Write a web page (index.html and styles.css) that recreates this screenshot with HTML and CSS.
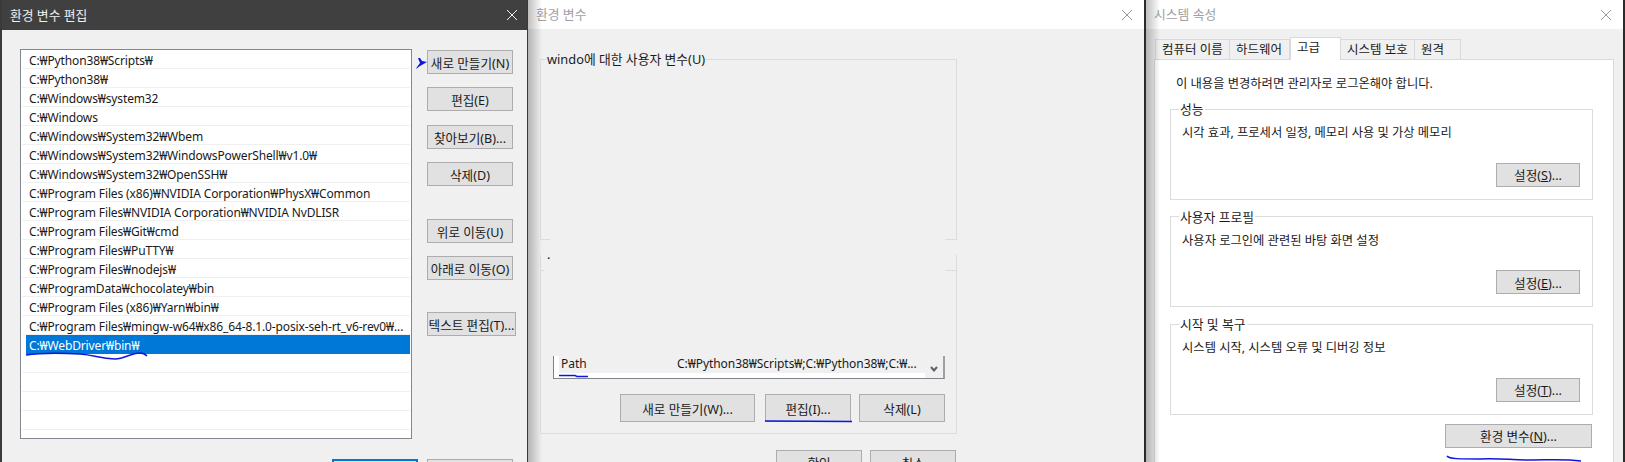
FILE: index.html
```html
<!DOCTYPE html>
<html lang="ko">
<head>
    <meta charset="UTF-8">
    <title>환경 변수 편집</title>
    <link rel="stylesheet" href="styles.css">
</head>
<body>
    <div class="desktop">
        <!-- edit dialog, focused -->
        <section class="window window-edit">
            <div class="titlebar titlebar-dark">
                <span class="title">환경 변수 편집</span>
                <svg class="close" width="12" height="12" viewBox="0 0 12 12"><path d="M1 1L11 11M11 1L1 11"/></svg>
            </div>
            <div class="edit-body">
                <div class="path-list">
                    <div class="path-row">C:₩Python38₩Scripts₩</div>
                    <div class="path-row">C:₩Python38₩</div>
                    <div class="path-row">C:₩Windows₩system32</div>
                    <div class="path-row">C:₩Windows</div>
                    <div class="path-row">C:₩Windows₩System32₩Wbem</div>
                    <div class="path-row">C:₩Windows₩System32₩WindowsPowerShell₩v1.0₩</div>
                    <div class="path-row">C:₩Windows₩System32₩OpenSSH₩</div>
                    <div class="path-row">C:₩Program Files (x86)₩NVIDIA Corporation₩PhysX₩Common</div>
                    <div class="path-row">C:₩Program Files₩NVIDIA Corporation₩NVIDIA NvDLISR</div>
                    <div class="path-row">C:₩Program Files₩Git₩cmd</div>
                    <div class="path-row">C:₩Program Files₩PuTTY₩</div>
                    <div class="path-row">C:₩Program Files₩nodejs₩</div>
                    <div class="path-row">C:₩ProgramData₩chocolatey₩bin</div>
                    <div class="path-row">C:₩Program Files (x86)₩Yarn₩bin₩</div>
                    <div class="path-row">C:₩Program Files₩mingw-w64₩x86_64-8.1.0-posix-seh-rt_v6-rev0₩...</div>
                    <div class="path-row selected"><span>C:₩WebDriver₩bin₩</span></div>
                    <div class="path-row"></div>
                    <div class="path-row"></div>
                    <div class="path-row"></div>
                    <div class="path-row"></div>
                </div>
                <div class="edit-buttons">
                    <button class="btn gap-13">새로 만들기(N)</button>
                    <button class="btn gap-14">편집(E)</button>
                    <button class="btn gap-13">찾아보기(B)...</button>
                    <button class="btn gap-33">삭제(D)</button>
                    <button class="btn gap-13">위로 이동(U)</button>
                    <button class="btn gap-32">아래로 이동(O)</button>
                    <button class="btn btn-wide">텍스트 편집(T)...</button>
                </div>
            </div>
            <div class="edit-footer">
                <button class="btn btn-default">확인</button>
                <button class="btn">취소</button>
            </div>
        </section>

        <!-- environment variables dialog -->
        <section class="window window-env">
            <div class="titlebar titlebar-light">
                <span class="title">환경 변수</span>
                <svg class="close" width="12" height="12" viewBox="0 0 12 12"><path d="M1 1L11 11M11 1L1 11"/></svg>
            </div>
            <div class="env-body">
                <fieldset class="env-group env-user">
                    <legend>windo에 대한 사용자 변수(U)</legend>
                </fieldset>
                <fieldset class="env-group env-system">
                    <legend>.</legend>
                    <div class="var-list">
                        <div class="var-row">
                            <span class="var-name">Path</span>
                            <span class="var-value">C:₩Python38₩Scripts₩;C:₩Python38₩;C:₩...</span>
                        </div>
                        <div class="var-scroll">
                            <svg width="8" height="6" viewBox="0 0 8 6"><path d="M1 1L4 4.5L7 1"/></svg>
                        </div>
                    </div>
                    <div class="env-buttons">
                        <button class="btn btn-new">새로 만들기(W)...</button>
                        <button class="btn btn-env">편집(I)...</button>
                        <button class="btn btn-env">삭제(L)</button>
                    </div>
                </fieldset>
                <div class="env-footer">
                    <button class="btn btn-ok">확인</button>
                    <button class="btn btn-ok">취소</button>
                </div>
            </div>
        </section>

        <!-- system properties dialog -->
        <section class="window window-sys">
            <div class="titlebar titlebar-light">
                <span class="title">시스템 속성</span>
                <svg class="close" width="12" height="12" viewBox="0 0 12 12"><path d="M1 1L11 11M11 1L1 11"/></svg>
            </div>
            <div class="sys-body">
                <div class="tabs">
                    <div class="tab tab-1">컴퓨터 이름</div>
                    <div class="tab tab-2">하드웨어</div>
                    <div class="tab tab-3 active">고급</div>
                    <div class="tab tab-4">시스템 보호</div>
                    <div class="tab tab-5">원격</div>
                </div>
                <div class="panel">
                    <p class="panel-note">이 내용을 변경하려면 관리자로 로그온해야 합니다.</p>
                    <fieldset class="sys-group">
                        <legend>성능</legend>
                        <p>시각 효과, 프로세서 일정, 메모리 사용 및 가상 메모리</p>
                        <button class="btn btn-set">설정(<u>S</u>)...</button>
                    </fieldset>
                    <fieldset class="sys-group">
                        <legend>사용자 프로필</legend>
                        <p>사용자 로그인에 관련된 바탕 화면 설정</p>
                        <button class="btn btn-set">설정(<u>E</u>)...</button>
                    </fieldset>
                    <fieldset class="sys-group">
                        <legend>시작 및 복구</legend>
                        <p>시스템 시작, 시스템 오류 및 디버깅 정보</p>
                        <button class="btn btn-set">설정(<u>T</u>)...</button>
                    </fieldset>
                    <div class="panel-footer">
                        <button class="btn btn-vars">환경 변수(<u>N</u>)...</button>
                    </div>
                </div>
            </div>
        </section>

        <!-- pen marks drawn over the screenshot -->
        <svg class="scribbles" width="1625" height="462" viewBox="0 0 1625 462">
            <path class="pen-fill" d="M418 58L420 58L422 61L427 62L420 66L416 69L417 67L420 63Z"/>
            <path class="pen" d="M26 355C40 353 60 353 80 354C95 355 100 359 115 359C125 359 130 353 140 353C143 353 145 354 147 356"/>
            <path class="pen" d="M559 375.5L575 375.5L577 376.5L588 376.5"/>
            <path class="pen" d="M765 421L852 421.5"/>
            <path class="pen" d="M1447 456C1449 459 1460 459 1480 459C1500 458 1510 460 1530 460C1550 460 1565 459 1581 461"/>
        </svg>
    </div>
</body>
</html>
```

FILE: styles.css
```css
* {
    box-sizing: border-box;
}
html, body {
    margin: 0;
    height: 462px;
    overflow: hidden;
}
body {
    font-family: "Noto Sans", "Noto Sans CJK KR", sans-serif;
    font-size: 12px;
    color: #1a1a1a;
    background-color: #f0f0f0;
}
p {
    margin: 0;
}
.desktop {
    position: relative;
    display: flex;
    width: 1625px;
    height: 462px;
    overflow: hidden;
    background-color: #2b2b2b;
}
.scribbles {
    position: absolute;
    left: 0;
    top: 0;
    pointer-events: none;
}
.pen {
    fill: none;
    stroke: #0b16e0;
    stroke-width: 1.5;
}
.pen-fill {
    fill: #0b16e0;
}

/* windows */
.window {
    height: 462px;
    overflow: hidden;
    background-color: #f0f0f0;
    flex: none;
}
.window-edit {
    width: 528px;
    border-left: 2px solid #3a3a3a;
    border-right: 1px solid #3a3a3a;
}
.window-env {
    position: relative;
    width: 618px;
    border-right: 2px solid #2b2b2b;
}
.window-sys {
    position: relative;
    width: 477px;
}
.window-env::before, .window-sys::before {
    content: "";
    position: absolute;
    left: 0;
    top: 0;
    bottom: 0;
    width: 14px;
    background: linear-gradient(to right, rgba(0, 0, 0, 0.25), rgba(0, 0, 0, 0));
    pointer-events: none;
}
.titlebar {
    display: flex;
    align-items: center;
    justify-content: space-between;
}
.titlebar-dark {
    height: 30px;
    padding: 0 9px 0 8px;
    background-color: #404040;
    color: #f0f0f0;
}
.titlebar-light {
    height: 29px;
    padding: 0 11px 0 8px;
    background-color: #fff;
    color: #a0a0a0;
}
.title {
    font-size: 12.8px;
    margin-top: -2px;
}
.close path {
    fill: none;
    stroke: #999;
    stroke-width: 1;
}
.titlebar-dark .close path {
    stroke: #f0f0f0;
}

/* buttons */
.btn {
    display: block;
    width: 86px;
    height: 24px;
    padding: 0;
    font-family: inherit;
    font-size: 12.6px;
    white-space: nowrap;
    color: #1a1a1a;
    background-color: #e1e1e1;
    border: 1px solid #adadad;
}
.btn-wide {
    width: 89px;
}
.btn-default {
    border: 2px solid #0078d7;
}
.gap-13 {
    margin-bottom: 13px;
}
.gap-14 {
    margin-bottom: 14px;
}
.gap-33 {
    margin-bottom: 33px;
}
.gap-32 {
    margin-bottom: 32px;
}

/* edit dialog */
.edit-body {
    display: flex;
    padding: 19px 0 0 18px;
}
.path-list {
    width: 392px;
    height: 390px;
    padding: 0 1px;
    background-color: #fff;
    border: 1px solid #828790;
}
.path-row {
    height: 19px;
    padding: 0 0 0 7px;
    line-height: 21px;
    letter-spacing: -0.13px;
    white-space: nowrap;
    border-bottom: 1px solid #f0f0f0;
}
.path-row.selected {
    margin-left: 4px;
    padding-left: 3px;
    color: #fff;
    background-color: #0078d7;
    border-bottom: none;
}
.edit-buttons {
    margin: 1px 0 0 15px;
    width: 90px;
}
.edit-footer {
    display: flex;
    gap: 9px;
    margin: 20px 0 0 330px;
}

/* environment variables dialog */
.env-body {
    padding: 22px 0 0 12px;
}
fieldset {
    margin: 0;
    padding: 0;
    min-width: 0;
}
legend {
    font-size: 12.8px;
}
.env-group {
    position: relative;
    width: 417px;
    border: 1px solid #dcdcdc;
}
.env-group legend {
    margin-left: 6px;
    padding: 0;
    line-height: 16px;
}
.env-user {
    height: 189px;
    margin-bottom: 6px;
    border-bottom-color: #f0f0f0;
}
.env-system {
    height: 188px;
    border-top-color: #f0f0f0;
}
/* leftover corners of the hidden border edges */
.env-user::before, .env-user::after, .env-system::before, .env-system::after {
    content: "";
    position: absolute;
    height: 1px;
    background-color: #dcdcdc;
}
.env-user::before {
    left: -1px;
    bottom: -1px;
    width: 10px;
}
.env-user::after {
    right: -1px;
    bottom: -1px;
    width: 12px;
}
.env-system::before {
    left: -1px;
    top: 8px;
    width: 4px;
}
.env-system::after {
    right: -1px;
    top: 8px;
    width: 12px;
}
.var-list {
    display: flex;
    width: 392px;
    height: 23px;
    margin: 94px 0 0 12px;
    background-color: #fff;
    border-left: 1px solid #808080;
    border-right: 2px solid #a0a0a0;
    border-bottom: 1px solid #82828c;
}
.var-row {
    display: flex;
    width: 366px;
    height: 17px;
    margin-left: 5px;
    padding-left: 2px;
    line-height: 16px;
    letter-spacing: -0.05px;
    background-color: #f0f0f0;
}
.var-name {
    width: 116px;
}
.var-scroll {
    width: 18px;
    height: 22px;
    display: flex;
    align-items: flex-end;
    justify-content: center;
    padding-bottom: 6px;
    background-color: #f0f0f0;
}
.var-scroll path {
    fill: none;
    stroke: #606060;
    stroke-width: 2;
}
.env-buttons {
    display: flex;
    gap: 8px;
    margin: 15px 0 0 79px;
}
.btn-env {
    width: 86px;
    height: 28px;
}
.btn-new {
    width: 135px;
    height: 28px;
    margin-right: 2px;
}
.btn-ok {
    width: 86px;
}
.env-footer {
    display: flex;
    gap: 8px;
    margin: 16px 0 0 236px;
}

/* system properties dialog */
.sys-body {
    padding: 8px 0 0 8px;
}
.tabs {
    display: flex;
    align-items: flex-end;
    height: 22px;
    padding-left: 1px;
}
.tab {
    height: 20px;
    line-height: 19px;
    padding-left: 6px;
    font-size: 12.5px;
    border: 1px solid #d9d9d9;
    border-bottom: none;
    border-left: none;
}
.tab-1 {
    width: 75px;
    border-left: 1px solid #d9d9d9;
}
.tab-2 {
    width: 60px;
}
.tab-3 {
    width: 51px;
    height: 23px;
    margin-bottom: -1px;
    position: relative;
    background-color: #fff;
    border-left: 1px solid #d9d9d9;
}
.tab-4 {
    width: 74px;
}
.tab-5 {
    width: 46px;
}
.panel {
    width: 460px;
    height: 420px;
    padding: 15px 20px 0 15px;
    font-size: 12.3px;
    background-color: #fff;
    border: 1px solid #d9d9d9;
}
.panel-note {
    padding-left: 6px;
    line-height: 17px;
    margin-bottom: 9px;
}
.sys-group {
    height: 98.5px;
    margin-bottom: 9px;
    padding: 7px 12px 0 11px;
    border: 1px solid #dcdcdc;
}
.sys-group legend {
    margin-left: -3px;
    padding: 0 1px;
    line-height: 16px;
}
.sys-group p {
    line-height: 17px;
}
.btn-set {
    margin: 21.5px 0 0 auto;
    width: 84px;
}
.panel-footer {
    display: flex;
    justify-content: flex-end;
    margin-top: 6.5px;
    padding-right: 1px;
}
.btn-vars {
    width: 147px;
}
```
